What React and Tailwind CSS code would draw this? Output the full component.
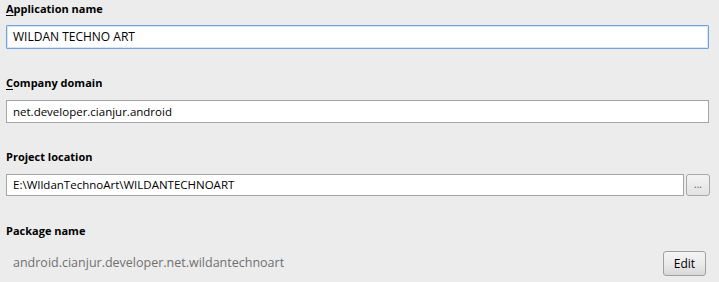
export default function App() {
  const font = { fontFamily: '"Open Sans", "Noto Sans", sans-serif' };
  return (
    <div
      className="w-[719px] h-[282px] bg-[#ececec] pl-[6px] pr-[10px] text-[11.5px] text-black overflow-hidden"
      style={font}
    >
      <div className="h-[18px] leading-[18px] font-bold text-[11px]">
        <span className="underline underline-offset-2">A</span>pplication name
      </div>
      <div className="mt-[7px] h-[24px] border border-[#6fa3dc] shadow-[inset_0_0_0_1px_#d6e6f7] bg-white rounded-[1px] flex items-center pl-[6px] leading-none">
        <span className="text-[12px]">WILDAN TECHNO ART</span>
      </div>

      <div className="mt-[25px] h-[18px] leading-[18px] font-bold text-[11px]">
        <span className="underline underline-offset-2">C</span>ompany domain
      </div>
      <div className="mt-[8px] h-[23px] border border-[#a5a5a5] bg-white flex items-center pl-[6px] leading-none">
        net.developer.cianjur.android
      </div>

      <div className="mt-[25px] h-[18px] leading-[18px] font-bold text-[11px]">Project location</div>
      <div className="mt-[8px] flex gap-[2px] h-[22px]">
        <div className="flex-1 border border-[#a5a5a5] bg-white flex items-center pl-[6px] leading-none">
          E:\WIldanTechnoArt\WILDANTECHNOART
        </div>
        <div className="w-[24px] mr-[-1px] border border-[#a8a8a8] rounded-[3px] bg-gradient-to-b from-[#f3f3f3] to-[#e3e3e3] flex items-center justify-center text-[10px] text-[#555] leading-none pb-[2px]">
          ...
        </div>
      </div>

      <div className="mt-[26px] h-[18px] leading-[18px] font-bold text-[11px]">Package name</div>
      <div className="mt-[11px] flex items-center justify-between">
        <div className="pl-[7px] text-[#707070] leading-none text-[12.5px]">android.cianjur.developer.net.wildantechnoart</div>
        <div className="w-[43px] h-[25px] mr-[3px] border border-[#a0a0a0] rounded-[3px] bg-gradient-to-b from-[#f4f4f4] via-[#ebebeb] to-[#d8d8d8] flex items-center justify-center leading-none text-[12px]">
          Edit
        </div>
      </div>
    </div>
  );
}
